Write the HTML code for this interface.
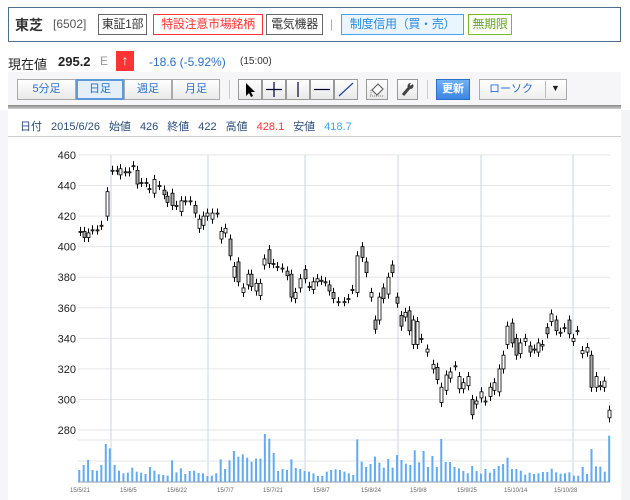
<!DOCTYPE html>
<html><head><meta charset="utf-8"><style>
*{margin:0;padding:0;box-sizing:border-box}
body{width:630px;height:500px;background:#fff;font-family:"Liberation Sans","Noto Sans CJK JP",sans-serif;position:relative;overflow:hidden;color:#222}
.a{position:absolute;white-space:nowrap}
.tag{position:absolute;top:14px;height:21px;border:1px solid #666;font-size:12px;line-height:19px;padding:0;text-align:center;white-space:nowrap;overflow:hidden;letter-spacing:-0.3px}
.btn{position:absolute;top:79px;height:21px;border:1px solid #aaa;background:linear-gradient(#fff,#e9e9e9);font-size:11px;line-height:19px;text-align:center;color:#2a6fc9}
.tb{position:absolute;top:79px;width:24px;height:21px;border:1px solid #999;background:linear-gradient(#fff,#e8e8e8)}
.info span{margin-right:9px}
</style></head><body>
<div class="a" style="left:8px;top:7px;width:613px;height:35px;border:1px solid #4d6e8e"></div>
<div class="a" style="left:15px;top:15px;font-size:14px;font-weight:bold;color:#333">東芝</div>
<div class="a" style="left:53px;top:17px;font-size:12px;color:#555">[6502]</div>
<div class="tag" style="left:98px;width:49px;color:#333">東証1部</div>
<div class="tag" style="left:153px;width:110px;border-color:#f33;color:#f33">特設注意市場銘柄</div>
<div class="tag" style="left:266px;width:57px;color:#333">電気機器</div>
<div class="a" style="left:330px;top:17px;font-size:12px;color:#aaa">|</div>
<div class="tag" style="left:341px;width:123px;border-color:#4aa3f0;background:#eaf5ff;color:#2a8ae0">制度信用（買・売）</div>
<div class="tag" style="left:468px;width:44px;border-color:#7bbb2a;color:#6aa520">無期限</div>

<div class="a" style="left:8px;top:54px;font-size:13px">現在値</div>
<div class="a" style="left:58px;top:54px;font-size:13px;font-weight:bold">295.2</div>
<div class="a" style="left:100px;top:54px;font-size:12px;color:#999">E</div>
<div class="a" style="left:116px;top:51px;width:18px;height:20px;background:#f33;color:#fff;font-size:14px;text-align:center;line-height:19px;font-weight:bold">↑</div>
<div class="a" style="left:149px;top:55px;font-size:12px;color:#2a6fc9">-18.6 (-5.92%)</div>
<div class="a" style="left:240px;top:56px;font-size:10px;color:#333">(15:00)</div>

<div class="a" style="left:8px;top:72px;width:613px;height:33px;background:#f6f6f8"></div>
<div class="a" style="left:8px;top:105px;width:613px;height:4px;background:linear-gradient(#888,#cfcfcf)"></div>
<div class="btn" style="left:17px;width:59px">5分足</div>
<div class="btn" style="left:76px;width:48px;border:2px solid #5c9ad8;background:#e4effa;line-height:17px">日足</div>
<div class="btn" style="left:124px;width:48px">週足</div>
<div class="btn" style="left:172px;width:48px">月足</div>
<div class="a" style="left:229px;top:80px;width:1px;height:19px;background:#ccc"></div>
<div class="tb" style="left:238px"><svg width="22" height="19"><path d="M7 3 L7 16 L10 13 L12 17 L14 16 L12 12 L16 12 Z" fill="#000"/></svg></div>
<div class="tb" style="left:262px"><svg width="22" height="19"><path d="M11 2V17M3 9.5H19" stroke="#003" stroke-width="1.2"/></svg></div>
<div class="tb" style="left:286px"><svg width="22" height="19"><path d="M11 2V17" stroke="#003" stroke-width="1.2"/></svg></div>
<div class="tb" style="left:310px"><svg width="22" height="19"><path d="M3 9.5H19" stroke="#003" stroke-width="1.2"/></svg></div>
<div class="tb" style="left:334px"><svg width="22" height="19"><path d="M4 16L18 3" stroke="#24a" stroke-width="1.2"/></svg></div>
<div class="tb" style="left:366px;width:22px"><svg width="20" height="19"><path d="M5 10L11 4L16 9L10 15Z" fill="#fff" stroke="#555"/><path d="M3 16H17" stroke="#777" stroke-dasharray="1 1"/><path d="M4 10V16" stroke="#777" stroke-dasharray="1 1"/></svg></div>
<div class="tb" style="left:397px;width:21px"><svg width="19" height="19"><path d="M5 15L11 8" stroke="#444" stroke-width="3"/><circle cx="12.5" cy="6" r="3" fill="#444"/><path d="M12 5L15 3" stroke="#fff" stroke-width="1.5"/></svg></div>
<div class="a" style="left:427px;top:80px;width:1px;height:19px;background:#ccc"></div>
<div class="a" style="left:436px;top:79px;width:34px;height:21px;background:linear-gradient(#6fb1f7,#3b86e4);border:1px solid #2a6fc9;color:#fff;font-size:11px;font-weight:bold;text-align:center;line-height:19px">更新</div>
<div class="a" style="left:479px;top:79px;width:88px;height:21px;border:1px solid #aaa;background:linear-gradient(#fff,#eee);font-size:11px;line-height:19px;color:#2a6fc9;padding-left:9px">ローソク</div>
<div class="a" style="left:545px;top:81px;width:1px;height:17px;background:#bbb"></div>
<div class="a" style="left:551px;top:83px;font-size:9px">▼</div>

<div class="a info" style="left:20px;top:118px;font-size:11px;color:#2a4d7a"><span>日付</span><span>2015/6/26</span><span>始値</span><span>426</span><span>終値</span><span>422</span><span>高値</span><span style="color:#f33">428.1</span><span>安値</span><span style="color:#3aa8f0">418.7</span></div>
<div class="a" style="left:8px;top:136px;width:613px;height:1px;background:#ccc"></div>
<div class="a" style="left:621px;top:110px;width:9px;height:390px;background:#f3f4f6"></div>
<div class="a" style="left:0;top:110px;width:8px;height:390px;background:#f6f6f8"></div>

<svg class="a" style="left:0;top:0" width="630" height="500" id="ch"></svg>
<script>
var s='',Y=function(v){return 155+(460-v)*1.528};
for(var v=460;v>=280;v-=20){var y=Y(v);s+='<line x1="78" x2="610" y1="'+y+'" y2="'+y+'" stroke="#e6e6e6"/><text x="76" y="'+(y+4)+'" font-size="11" text-anchor="end" fill="#222" font-family="Liberation Sans">'+v+'</text>';}
[111,208,305,398,481,573].forEach(function(x){s+='<line x1="'+x+'" x2="'+x+'" y1="155" y2="482" stroke="#c8d4e0"/>';});
s+='<line x1="78" x2="610" y1="440" y2="440" stroke="#e6e6e6"/><line x1="78" x2="610" y1="461" y2="461" stroke="#e6e6e6"/><line x1="78" x2="610" y1="482" y2="482" stroke="#999"/>';
var C=[[80,410,410],[84,410,406],[88,406,409],[92,411,411],[97,411,411],[101,414,414],[107,420,436],[112,450,450],[117,450,450],[120,447,451],[125,449,449],[129,449,449],[133,453,453],[137,450,441],[141,442,442],[146,442,442],[149,438,438],[154,435,444],[159,440,440],[164,437,434],[167,433,429],[172,435,427],[176,427,427],[181,423,430],[185,430,430],[190,430,430],[195,427,422],[199,412,418],[203,414,420],[207,420,422],[212,418,422],[217,422,422],[221,405,410],[225,409,412],[230,405,394],[234,380,387],[238,390,377],[243,370,373],[248,375,382],[251,382,374],[256,371,376],[260,368,376],[264,388,392],[269,398,389],[273,389,389],[277,387,387],[282,386,386],[287,384,381],[291,382,367],[295,366,370],[300,373,379],[305,385,379],[309,374,374],[313,372,377],[317,377,379],[321,378,378],[325,377,377],[329,375,371],[333,370,366],[338,364,364],[344,364,364],[348,366,366],[352,372,372],[357,370,394],[362,400,393],[366,390,383],[371,367,370],[375,352,346],[379,352,367],[383,373,366],[388,369,380],[392,388,383],[397,367,363],[401,355,348],[405,354,357],[409,358,345],[413,336,352],[417,336,351],[421,340,340],[427,331,333],[433,320,323],[437,321,313],[441,298,308],[446,306,316],[450,314,318],[455,322,322],[459,307,315],[463,307,311],[468,309,315],[472,300,290],[476,297,299],[481,301,305],[485,299,299],[490,302,308],[494,306,311],[499,305,320],[503,320,329],[507,336,348],[512,350,337],[516,340,329],[520,330,337],[525,338,340],[530,335,331],[534,333,333],[538,331,337],[542,335,336],[547,347,343],[551,351,356],[556,352,345],[560,344,344],[564,347,347],[569,352,343],[573,338,340],[577,345,345],[582,330,332],[587,331,334],[591,329,308],[596,308,315],[600,309,309],[604,308,312],[609,288,293]];
C.forEach(function(c){var x=c[0],o=c[1],cl=c[2],hi=Math.max(o,cl)+3,lo=Math.min(o,cl)-3;
s+='<line x1="'+(x+.5)+'" x2="'+(x+.5)+'" y1="'+Y(hi)+'" y2="'+Y(lo)+'" stroke="#000"/>';
var t=Y(Math.max(o,cl)),h=Math.max(1,Y(Math.min(o,cl))-t);
s+='<rect x="'+(x-1)+'" y="'+t+'" width="3" height="'+h+'" fill="'+(cl<o?'#aaa':'#fff')+'" stroke="#000" stroke-width=".8"/>';});
var V=[[197,150],[208,135],[219,120],[230,150],[241,152],[252,135],[263,72],[273,85],[285,135],[296,152],[307,160],[318,158],[329,143],[340,155],[351,158],[362,162],[373,141],[384,152],[395,163],[406,165],[417,167],[428,121],[439,157],[450,145],[461,162],[472,153],[483,152],[494,159],[505,160],[516,168],[527,167],[538,160],[549,118],[560,147],[571,121],[582,93],[593,110],[604,103],[615,113],[626,125],[637,116],[648,116],[659,42],[670,56],[681,99],[692,153],[703,147],[714,150],[725,118],[736,144],[747,147],[758,153],[769,155],[780,160],[791,168],[802,168],[813,155],[824,150],[835,148],[846,150],[857,155],[868,160],[879,165],[889,58],[900,125],[911,141],[922,132],[933,110],[944,128],[955,143],[966,117],[977,143],[988,105],[999,120],[1010,131],[1021,135],[1032,91],[1043,127],[1054,93],[1065,141],[1076,108],[1087,141],[1098,57],[1109,126],[1120,126],[1131,141],[1142,145],[1153,153],[1164,160],[1175,138],[1186,153],[1197,161],[1208,147],[1219,158],[1230,147],[1241,138],[1252,132],[1263,113],[1274,147],[1285,147],[1296,152],[1307,164],[1318,158],[1329,162],[1340,160],[1351,156],[1362,156],[1373,146],[1384,157],[1395,161],[1406,160],[1417,157],[1428,167],[1439,167],[1450,141],[1461,162],[1472,87],[1483,139],[1494,140],[1505,155],[1516,47]];
V.forEach(function(b){var x=b[0]/2.489,t=420+b[1]/3;s+='<rect x="'+(x-.9)+'" y="'+t+'" width="2" height="'+(482-t)+'" fill="#62aaf3"/>';});
var L=[[70,'15/5/21'],[120,'15/6/5'],[167,'15/6/22'],[217,'15/7/7'],[263,'15/7/21'],[313,'15/8/7'],[361,'15/8/24'],[410,'15/9/8'],[457,'15/9/25'],[504,'15/10/14'],[554,'15/10/28']];
L.forEach(function(l){s+='<text x="'+l[0]+'" y="492" font-size="6" fill="#666" font-family="Liberation Sans">'+l[1]+'</text>';});
document.getElementById('ch').innerHTML=s;
</script>
</body></html>
